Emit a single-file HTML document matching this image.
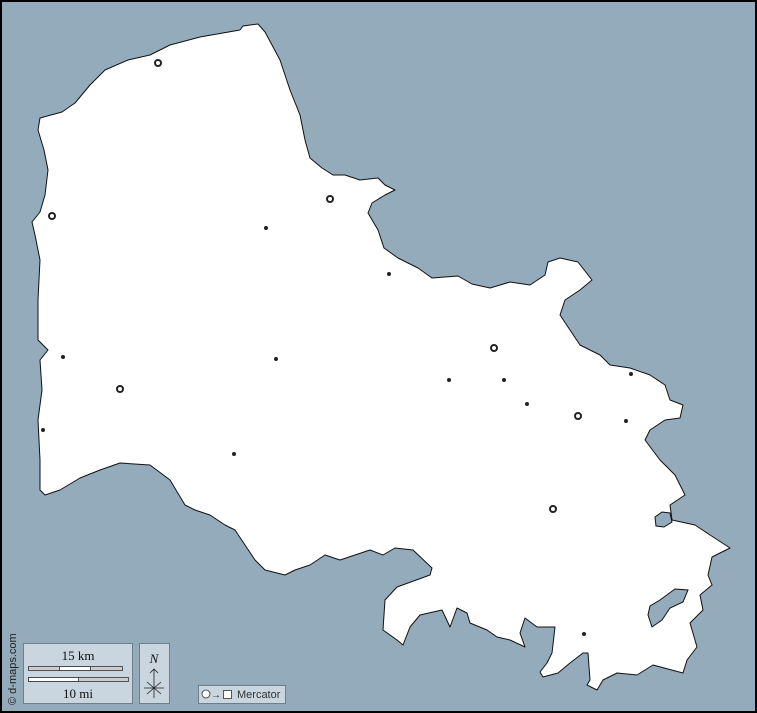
<!DOCTYPE html>
<html><head><style>
html,body{margin:0;padding:0;background:#000;}
svg{display:block;}
</style></head><body>
<svg width="757" height="713" viewBox="0 0 757 713" xmlns="http://www.w3.org/2000/svg">
<rect x="0" y="0" width="757" height="713" fill="#000"/>
<rect x="2" y="2" width="753" height="709" fill="#94abbb"/>
<path fill="#fff" stroke="#111" stroke-width="1" stroke-linejoin="round" d="M40,118 L62,112 L75,103 L90,85 L105,70 L128,60 L150,55 L170,45 L200,37 L240,30 L243,26 L258,24 L265,32 L272,45 L280,60 L290,90 L300,115 L305,140 L310,158 L322,168 L333,175 L345,175 L360,180 L378,178 L385,185 L395,190 L385,195 L372,203 L368,213 L378,230 L384,248 L398,258 L418,268 L432,278 L458,276 L472,284 L490,288 L510,282 L530,285 L545,275 L548,262 L560,258 L578,262 L592,280 L580,290 L565,300 L560,315 L570,330 L580,345 L600,355 L610,365 L630,368 L650,375 L665,385 L670,400 L683,405 L680,418 L665,420 L650,430 L645,440 L660,460 L675,475 L685,495 L670,505 L672,520 L695,525 L710,535 L730,548 L712,557 L708,575 L712,585 L700,595 L703,610 L690,623 L697,647 L687,660 L683,673 L653,665 L637,675 L617,673 L603,680 L597,690 L587,685 L590,680 L588,653 L583,653 L570,663 L558,673 L543,677 L540,672 L547,663 L552,653 L555,627 L537,627 L525,618 L520,633 L525,647 L510,640 L497,637 L487,630 L470,623 L467,613 L457,608 L450,627 L442,610 L420,615 L410,627 L403,645 L397,640 L383,630 L385,600 L397,587 L430,575 L432,568 L413,550 L395,548 L383,555 L370,550 L355,555 L340,560 L325,555 L310,565 L295,570 L285,575 L265,570 L255,560 L245,545 L235,530 L225,525 L210,515 L195,510 L185,505 L170,480 L150,465 L120,463 L100,470 L80,478 L60,490 L45,495 L40,490 L40,460 L38,420 L42,390 L40,360 L48,350 L38,340 L38,300 L40,260 L35,235 L32,222 L40,212 L45,195 L48,170 L44,150 L38,130 Z"/>
<path fill="#94abbb" stroke="#111" stroke-width="1" d="M655,517 L662,512 L670,513 L672,522 L664,527 L656,526 Z"/>
<path fill="#94abbb" stroke="#111" stroke-width="1" d="M675,589 L688,590 L683,602 L670,608 L662,620 L652,627 L648,615 L650,606 L660,600 Z"/>
<g fill="none" stroke="#222" stroke-width="2">
<circle cx="158" cy="63" r="3"/><circle cx="52" cy="216" r="3"/><circle cx="330" cy="199" r="3"/><circle cx="120" cy="389" r="3"/><circle cx="494" cy="348" r="3"/><circle cx="578" cy="416" r="3"/><circle cx="553" cy="509" r="3"/>
</g>
<g fill="#222">
<circle cx="266" cy="228" r="2"/><circle cx="389" cy="274" r="2"/><circle cx="63" cy="357" r="2"/><circle cx="276" cy="359" r="2"/><circle cx="43" cy="430" r="2"/><circle cx="449" cy="380" r="2"/><circle cx="504" cy="380" r="2"/><circle cx="527" cy="404" r="2"/><circle cx="631" cy="374" r="2"/><circle cx="626" cy="421" r="2"/><circle cx="234" cy="454" r="2"/><circle cx="584" cy="634" r="2"/>
</g>
<text transform="translate(16,705) rotate(-90)" font-family="Liberation Sans, sans-serif" font-size="11" fill="#222">© d-maps.com</text>
<rect x="23.5" y="643.5" width="109" height="60" fill="#c9d6df" stroke="#6e7f8a"/>
<text x="78" y="660" text-anchor="middle" font-family="Liberation Serif, serif" font-size="13" fill="#111">15 km</text>
<rect x="28.5" y="666.5" width="94" height="4" fill="#ccc" stroke="#333" stroke-width="0.8"/>
<rect x="59.5" y="666.5" width="31" height="4" fill="#fff" stroke="#333" stroke-width="0.8"/>
<rect x="28.5" y="677.5" width="100" height="4" fill="#ccc" stroke="#333" stroke-width="0.8"/>
<rect x="28.5" y="677.5" width="50" height="4" fill="#fff" stroke="#333" stroke-width="0.8"/>
<text x="78" y="698" text-anchor="middle" font-family="Liberation Serif, serif" font-size="13" fill="#111">10 mi</text>
<rect x="139.5" y="643.5" width="30" height="60" fill="#c9d6df" stroke="#6e7f8a"/>
<text x="154" y="663" text-anchor="middle" font-family="Liberation Serif, serif" font-style="italic" font-size="13" fill="#111">N</text>
<g stroke="#222" stroke-width="0.8" fill="none">
<path d="M154,669 L154,698 M150,673 L154,669 L158,673 M144,688 L164,688 M147,682 L161,694 M161,682 L147,694"/>
</g>
<rect x="198.5" y="685.5" width="87" height="18" fill="#c9d6df" stroke="#6e7f8a"/>
<circle cx="206" cy="694" r="4" fill="#fff" stroke="#333" stroke-width="0.8"/>
<text x="211" y="698" font-family="Liberation Sans, sans-serif" font-size="10" fill="#222">→</text>
<rect x="223.5" y="690.5" width="8" height="8" fill="#fff" stroke="#333" stroke-width="0.8"/>
<text x="237" y="698" font-family="Liberation Sans, sans-serif" font-size="11" fill="#333">Mercator</text>
</svg>
</body></html>
